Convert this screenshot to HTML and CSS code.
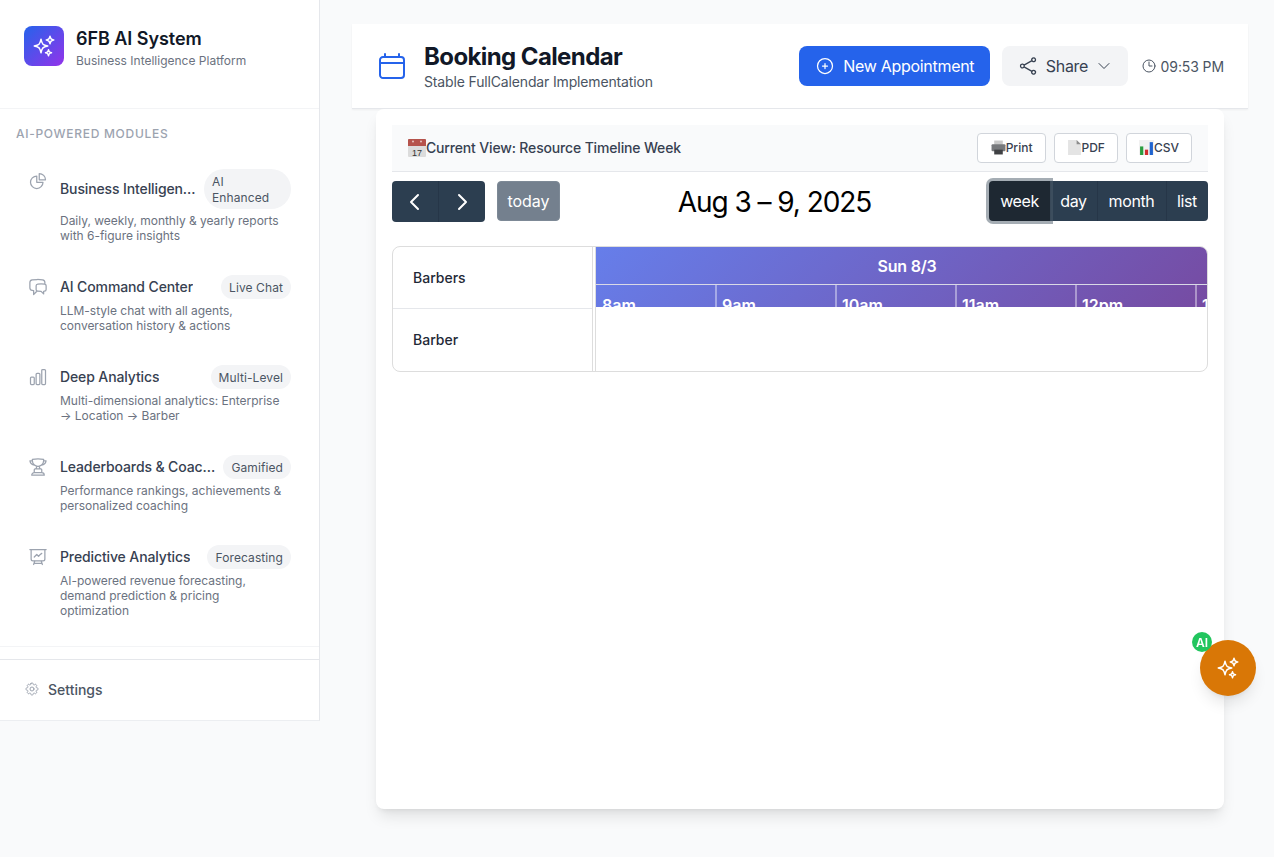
FILE: index.html
```html
<!DOCTYPE html>
<html lang="en">
<head>
  <meta charset="UTF-8">
  <meta name="viewport" content="width=device-width, initial-scale=1.0">
  <title>Booking Calendar</title>
  <link rel="stylesheet" href="styles.css">
</head>
<body>

<div class="app">
  <aside class="sidebar">
    <div class="brand">
      <div class="brand-logo">
        <svg class="icon" width="24" height="24" viewBox="0 0 24 24"><path d="M9.813 15.904 9 18.75l-.813-2.846a4.5 4.5 0 0 0-3.09-3.09L2.25 12l2.846-.813a4.5 4.5 0 0 0 3.09-3.09L9 5.25l.813 2.846a4.5 4.5 0 0 0 3.09 3.09L15.75 12l-2.846.813a4.5 4.5 0 0 0-3.09 3.09ZM18.259 8.715 18 9.75l-.259-1.035a3.375 3.375 0 0 0-2.455-2.456L14.25 6l1.036-.259a3.375 3.375 0 0 0 2.455-2.456L18 2.25l.259 1.035a3.375 3.375 0 0 0 2.456 2.456L21.75 6l-1.035.259a3.375 3.375 0 0 0-2.456 2.456ZM16.894 20.567 16.5 21.75l-.394-1.183a2.25 2.25 0 0 0-1.423-1.423L13.5 18.75l1.183-.394a2.25 2.25 0 0 0 1.423-1.423l.394-1.183.394 1.183a2.25 2.25 0 0 0 1.423 1.423l1.183.394-1.183.394a2.25 2.25 0 0 0-1.423 1.423Z"/></svg>
      </div>
      <div>
        <div class="brand-name">6FB AI System</div>
        <div class="brand-sub">Business Intelligence Platform</div>
      </div>
    </div>

    <div class="nav">
      <div class="nav-label">AI-POWERED MODULES</div>

      <div class="nav-item">
        <svg class="icon nav-icon" width="20" height="20" viewBox="0 0 24 24"><path d="M10.5 6a7.5 7.5 0 1 0 7.5 7.5h-7.5V6Z"/><path d="M13.5 10.5H21A7.5 7.5 0 0 0 13.5 3v7.5Z"/></svg>
        <div class="nav-body">
          <div class="nav-top">
            <span class="nav-title">Business Intelligence Reports</span>
            <span class="badge">AI Enhanced</span>
          </div>
          <div class="nav-desc">Daily, weekly, monthly &amp; yearly reports with 6-figure insights</div>
        </div>
      </div>

      <div class="nav-item">
        <svg class="icon nav-icon" width="20" height="20" viewBox="0 0 24 24"><path d="M20.25 8.511c.884.284 1.5 1.128 1.5 2.097v4.286c0 1.136-.847 2.1-1.98 2.193-.34.027-.68.052-1.02.072v3.091l-3-3c-1.354 0-2.694-.055-4.02-.163a2.115 2.115 0 0 1-.825-.242m9.345-8.334a2.126 2.126 0 0 0-.476-.095 48.64 48.64 0 0 0-8.048 0c-1.131.094-1.976 1.057-1.976 2.192v4.286c0 .837.46 1.58 1.155 1.951m9.345-8.334V6.637c0-1.621-1.152-3.026-2.76-3.235A48.455 48.455 0 0 0 11.25 3c-2.115 0-4.198.137-6.24.402-1.608.209-2.76 1.614-2.76 3.235v6.226c0 1.621 1.152 3.026 2.76 3.235.577.075 1.157.14 1.74.194V21l4.155-4.155"/></svg>
        <div class="nav-body">
          <div class="nav-top">
            <span class="nav-title">AI Command Center</span>
            <span class="badge">Live Chat</span>
          </div>
          <div class="nav-desc">LLM-style chat with all agents, conversation history &amp; actions</div>
        </div>
      </div>

      <div class="nav-item">
        <svg class="icon nav-icon" width="20" height="20" viewBox="0 0 24 24"><path d="M3 13.125C3 12.504 3.504 12 4.125 12h2.25c.621 0 1.125.504 1.125 1.125v6.75C7.5 20.496 6.996 21 6.375 21h-2.25A1.125 1.125 0 0 1 3 19.875v-6.75ZM9.75 8.625c0-.621.504-1.125 1.125-1.125h2.25c.621 0 1.125.504 1.125 1.125v11.25c0 .621-.504 1.125-1.125 1.125h-2.25a1.125 1.125 0 0 1-1.125-1.125V8.625ZM16.5 4.125c0-.621.504-1.125 1.125-1.125h2.25C20.496 3 21 3.504 21 4.125v15.75c0 .621-.504 1.125-1.125 1.125h-2.25a1.125 1.125 0 0 1-1.125-1.125V4.125Z"/></svg>
        <div class="nav-body">
          <div class="nav-top">
            <span class="nav-title">Deep Analytics</span>
            <span class="badge">Multi-Level</span>
          </div>
          <div class="nav-desc">Multi-dimensional analytics: Enterprise → Location → Barber</div>
        </div>
      </div>

      <div class="nav-item">
        <svg class="icon nav-icon" width="20" height="20" viewBox="0 0 24 24"><path d="M16.5 18.75h-9m9 0a3 3 0 0 1 3 3h-15a3 3 0 0 1 3-3m9 0v-3.375c0-.621-.503-1.125-1.125-1.125h-.871M7.5 18.75v-3.375c0-.621.504-1.125 1.125-1.125h.872m5.007 0H9.497m5.007 0a7.454 7.454 0 0 1-.982-3.172M9.497 14.25a7.454 7.454 0 0 0 .981-3.172M5.25 4.236c-.982.143-1.954.317-2.916.52A6.003 6.003 0 0 0 7.73 9.728M5.25 4.236V4.5c0 2.108.966 3.99 2.48 5.228M5.25 4.236V2.721C7.456 2.41 9.71 2.25 12 2.25c2.291 0 4.545.16 6.75.47v1.516M7.73 9.728a6.726 6.726 0 0 0 2.748 1.35m8.272-6.842V4.5c0 2.108-.966 3.99-2.48 5.228m2.48-5.492a46.32 46.32 0 0 1 2.916.52 6.003 6.003 0 0 1-5.395 4.972m0 0a6.726 6.726 0 0 1-2.749 1.35m0 0a6.772 6.772 0 0 1-3.044 0"/></svg>
        <div class="nav-body">
          <div class="nav-top">
            <span class="nav-title">Leaderboards &amp; Coaching</span>
            <span class="badge">Gamified</span>
          </div>
          <div class="nav-desc">Performance rankings, achievements &amp; personalized coaching</div>
        </div>
      </div>

      <div class="nav-item">
        <svg class="icon nav-icon" width="20" height="20" viewBox="0 0 24 24"><path d="M3.75 3v11.25A2.25 2.25 0 0 0 6 16.5h2.25M3.75 3h-1.5m1.5 0h16.5m0 0h1.5m-1.5 0v11.25A2.25 2.25 0 0 1 18 16.5h-2.25m-7.5 0h7.5m-7.5 0-1 3m8.5-3 1 3m0 0 .5 1.5m-.5-1.5h-9.5m0 0-.5 1.5m.75-9 3-3 2.148 2.148A12.061 12.061 0 0 1 16.5 7.605"/></svg>
        <div class="nav-body">
          <div class="nav-top">
            <span class="nav-title">Predictive Analytics</span>
            <span class="badge">Forecasting</span>
          </div>
          <div class="nav-desc">AI-powered revenue forecasting, demand prediction &amp; pricing optimization</div>
        </div>
      </div>
    </div>

    <div class="sidebar-foot">
      <svg class="icon" width="16" height="16" viewBox="0 0 24 24"><path d="M10.343 3.94c.09-.542.56-.94 1.11-.94h1.093c.55 0 1.02.398 1.11.94l.149.894c.07.424.384.764.78.93.398.164.855.142 1.205-.108l.737-.527a1.125 1.125 0 0 1 1.45.12l.773.774c.39.389.44 1.002.12 1.45l-.527.737c-.25.35-.272.806-.107 1.204.165.397.505.71.93.78l.893.15c.543.09.94.559.94 1.109v1.094c0 .55-.397 1.02-.94 1.11l-.894.149c-.424.07-.764.383-.929.78-.165.398-.143.854.107 1.204l.527.738c.32.447.269 1.06-.12 1.45l-.774.773a1.125 1.125 0 0 1-1.449.12l-.738-.527c-.35-.25-.806-.272-1.203-.107-.398.165-.71.505-.781.929l-.149.894c-.09.542-.56.94-1.11.94h-1.094c-.55 0-1.019-.398-1.11-.94l-.148-.894c-.071-.424-.384-.764-.781-.93-.398-.164-.854-.142-1.204.108l-.738.527c-.447.32-1.06.269-1.45-.12l-.773-.774a1.125 1.125 0 0 1-.12-1.45l.527-.737c.25-.35.272-.806.108-1.204-.165-.397-.506-.71-.93-.78l-.894-.15c-.542-.09-.94-.56-.94-1.109v-1.094c0-.55.398-1.02.94-1.11l.894-.149c.424-.07.765-.383.93-.78.165-.398.143-.854-.108-1.204l-.526-.738a1.125 1.125 0 0 1 .12-1.45l.773-.773a1.125 1.125 0 0 1 1.45-.12l.737.527c.35.25.807.272 1.204.107.397-.165.71-.505.78-.929l.15-.894Z"/><path d="M15 12a3 3 0 1 1-6 0 3 3 0 0 1 6 0Z"/></svg>
      <span>Settings</span>
    </div>
  </aside>

  <main class="main">
    <header class="topbar">
      <svg class="icon topbar-icon" width="32" height="32" viewBox="0 0 24 24"><path d="M6.75 3v2.25M17.25 3v2.25M3 18.75V7.5a2.25 2.25 0 0 1 2.25-2.25h13.5A2.25 2.25 0 0 1 21 7.5v11.25A2.25 2.25 0 0 1 18.75 21H5.25A2.25 2.25 0 0 1 3 18.75ZM3 9.75h18"/></svg>
      <div class="topbar-text">
        <h1>Booking Calendar</h1>
        <p>Stable FullCalendar Implementation</p>
      </div>
      <button class="btn-new">
        <svg class="icon" width="20" height="20" viewBox="0 0 24 24"><path d="M12 9v6m3-3H9m12 0a9 9 0 1 1-18 0 9 9 0 0 1 18 0Z"/></svg>
        New Appointment
      </button>
      <button class="btn-share">
        <svg class="icon" width="20" height="20" viewBox="0 0 24 24"><path d="M7.217 10.907a2.25 2.25 0 1 0 0 2.186m0-2.186c.18.324.283.696.283 1.093s-.103.77-.283 1.093m0-2.186 9.566-5.314m-9.566 7.5 9.566 5.314m0 0a2.25 2.25 0 1 0 3.935 2.186 2.25 2.25 0 0 0-3.935-2.186Zm0-12.814a2.25 2.25 0 1 0 3.933-2.185 2.25 2.25 0 0 0-3.933 2.185Z"/></svg>
        Share
        <svg class="icon" width="16" height="16" viewBox="0 0 24 24"><path d="m19.5 8.25-7.5 7.5-7.5-7.5"/></svg>
      </button>
      <div class="clock">
        <svg class="icon" width="16" height="16" viewBox="0 0 24 24"><path d="M12 6v6h4.5m4.5 0a9 9 0 1 1-18 0 9 9 0 0 1 18 0Z"/></svg>
        09:53 PM
      </div>
    </header>

    <section class="card">
      <div class="view-bar">
        <div class="view-name">
          <svg width="18" height="18" viewBox="0 0 18 18"><rect width="18" height="18" rx="1" fill="#dcdcdc"/><path d="M0 1a1 1 0 0 1 1-1h16a1 1 0 0 1 1 1v6H0Z" fill="#b5534c"/><circle cx="5" cy="2.5" r="1" fill="#e8c4c0"/><circle cx="13" cy="2.5" r="1" fill="#e8c4c0"/><text x="9" y="16.5" text-anchor="middle" class="emoji-num">17</text></svg>
          Current View: Resource Timeline Week
        </div>
        <div class="export">
          <button>
            <svg width="15" height="15" viewBox="0 0 14 14"><rect x="3" y="0.5" width="8" height="4" fill="#c9c9c9"/><rect x="0.5" y="4" width="13" height="6.5" rx="1" fill="#77797c"/><rect x="3" y="9" width="8" height="4.5" fill="#3f4144"/></svg>
            Print
          </button>
          <button>
            <svg width="15" height="15" viewBox="0 0 14 14"><path d="M1 0h8l4 4v10H1Z" fill="#e4e4e4"/><path d="M9 0l4 4H9Z" fill="#8d8d8d"/></svg>
            PDF
          </button>
          <button>
            <svg width="15" height="15" viewBox="0 0 14 14"><rect width="14" height="14" fill="#f1f1f1"/><rect x="1" y="6" width="3" height="8" fill="#2a9d3e"/><rect x="5.5" y="9" width="3" height="5" fill="#d32f2f"/><rect x="10" y="2" width="3" height="12" fill="#1f63cf"/></svg>
            CSV
          </button>
        </div>
      </div>

      <div class="cal-toolbar">
        <div class="cal-left">
          <div class="arrows">
            <button>
              <svg width="24" height="24" viewBox="0 0 24 24" class="arrow"><path d="M15 5l-7 7 7 7"/></svg>
            </button>
            <button>
              <svg width="24" height="24" viewBox="0 0 24 24" class="arrow"><path d="M9 5l7 7-7 7"/></svg>
            </button>
          </div>
          <button class="today">today</button>
        </div>
        <h2 class="cal-title">Aug 3 – 9, 2025</h2>
        <div class="views">
          <button class="view-week active">week</button>
          <button class="view-day">day</button>
          <button class="view-month">month</button>
          <button class="view-list">list</button>
        </div>
      </div>

      <div class="timeline">
        <div class="res-col">
          <div class="res-row">Barbers</div>
          <div class="res-row">Barber</div>
        </div>
        <div class="grid-col">
          <div class="grid-head">
            <div class="day-label">Sun 8/3</div>
            <div class="slots">
              <div class="slot">8am</div>
              <div class="slot">9am</div>
              <div class="slot">10am</div>
              <div class="slot">11am</div>
              <div class="slot">12pm</div>
              <div class="slot">1pm</div>
            </div>
          </div>
        </div>
      </div>
    </section>
  </main>
</div>

<button class="fab">
  <span class="fab-badge">AI</span>
  <svg class="icon" width="24" height="24" viewBox="0 0 24 24"><path d="M9.813 15.904 9 18.75l-.813-2.846a4.5 4.5 0 0 0-3.09-3.09L2.25 12l2.846-.813a4.5 4.5 0 0 0 3.09-3.09L9 5.25l.813 2.846a4.5 4.5 0 0 0 3.09 3.09L15.75 12l-2.846.813a4.5 4.5 0 0 0-3.09 3.09ZM18.259 8.715 18 9.75l-.259-1.035a3.375 3.375 0 0 0-2.455-2.456L14.25 6l1.036-.259a3.375 3.375 0 0 0 2.455-2.456L18 2.25l.259 1.035a3.375 3.375 0 0 0 2.456 2.456L21.75 6l-1.035.259a3.375 3.375 0 0 0-2.456 2.456ZM16.894 20.567 16.5 21.75l-.394-1.183a2.25 2.25 0 0 0-1.423-1.423L13.5 18.75l1.183-.394a2.25 2.25 0 0 0 1.423-1.423l.394-1.183.394 1.183a2.25 2.25 0 0 0 1.423 1.423l1.183.394-1.183.394a2.25 2.25 0 0 0-1.423 1.423Z"/></svg>
</button>

</body>
</html>
```

FILE: styles.css
```css
* { margin:0; padding:0; box-sizing:border-box; }

html, body { height:100%; overflow:hidden; }
body { background:#f9fafb; font-family:Inter, "Liberation Sans", sans-serif; color:#111827; }
button { font-family:inherit; cursor:pointer; border:none; }

.icon { fill:none; stroke:currentColor; stroke-width:1.5; stroke-linecap:round; stroke-linejoin:round; flex-shrink:0; display:block; }

.app { display:flex; align-items:flex-start; }

/* sidebar */
.sidebar { width:320px; height:721px; flex-shrink:0; background:#fff; border-right:1px solid #e5e7eb; border-bottom:1px solid #eceef1; display:flex; flex-direction:column; }

.brand { height:109px; padding:26px 24px 0; display:flex; gap:12px; border-bottom:1px solid #f3f4f6; }
.brand-logo { width:40px; height:40px; border-radius:8px; background:linear-gradient(135deg, #2563eb, #9333ea); color:#fff; display:flex; align-items:center; justify-content:center; }
.brand-name { font-size:18px; line-height:26px; font-weight:600; letter-spacing:-.05px; }
.brand-sub { font-size:12px; line-height:16px; color:#6b7280; margin-top:1px; }

.nav { padding:17px 16px 0; height:538px; border-bottom:1px solid #f3f4f6; }
.nav-label { font-size:12px; line-height:16px; font-weight:500; color:#9ca3af; letter-spacing:.7px; margin-bottom:15px; }
.nav-item { display:flex; gap:12px; padding:12px; margin-bottom:8px; }
.nav-icon { color:#9ca3af; margin-top:2px; }
.nav-body { flex:1; min-width:0; }
.nav-top { display:flex; align-items:center; justify-content:space-between; gap:8px; }
.nav-title { font-size:14px; line-height:20px; font-weight:500; color:#374151; letter-spacing:-.12px; white-space:nowrap; overflow:hidden; text-overflow:ellipsis; }
.badge { font-size:12px; line-height:16px; padding:5px 8px 3px; background:#f3f4f6; color:#4b5563; border-radius:9999px; letter-spacing:.1px; flex-shrink:0; max-width:87px; }
.nav-desc { font-size:12px; line-height:15px; color:#6b7280; margin-top:4px; letter-spacing:-.02px; }

.sidebar-foot { margin-top:12px; flex:1; border-top:1px solid #e5e7eb; padding:0 24px 2px; display:flex; align-items:center; gap:8px; font-size:14px; font-weight:500; color:#4b5563; }
.sidebar-foot .icon { color:#9ca3af; }

/* main */
.main { flex:1; min-width:0; padding:24px 26px 0 32px; }

.topbar { height:85px; background:#fff; border-bottom:1px solid #e5e7eb; box-shadow:0 1px 2px rgba(0,0,0,.05); padding:0 24px; display:flex; align-items:center; }
.topbar-icon { color:#2563eb; margin-right:16px; }
.topbar-text { flex:1; }
.topbar-text h1 { font-size:24px; line-height:30px; margin-top:2px; font-weight:700; letter-spacing:-.6px; }
.topbar-text p { font-size:14px; line-height:20px; color:#4b5563; letter-spacing:-.15px; }

.btn-new { height:40px; padding:0 16px; background:#2563eb; color:#fff; border-radius:8px; font-size:16px; letter-spacing:-.3px; display:flex; align-items:center; gap:8px; }
.btn-share { height:40px; padding:0 15.5px; margin-left:12px; background:#f3f4f6; color:#374151; border-radius:8px; font-size:16px; letter-spacing:-.3px; display:flex; align-items:center; gap:8px; }
.clock { margin-left:13px; font-size:14px; color:#4b5563; letter-spacing:-.1px; display:flex; align-items:center; gap:4px; }

.card { margin:0 24px; height:700px; background:#fff; border-radius:8px; box-shadow:0 10px 15px -3px rgba(0,0,0,.1), 0 4px 6px -4px rgba(0,0,0,.1); padding:16px; }

.view-bar { height:47px; background:#f9fafb; border-bottom:1px solid #e5e7eb; padding:0 16px 1px; display:flex; align-items:center; justify-content:space-between; }
.view-name { font-size:14px; font-weight:500; color:#374151; letter-spacing:-.16px; display:flex; align-items:center; }
.emoji-num { font-size:9px; font-family:"Liberation Sans", sans-serif; fill:#333; letter-spacing:0; }
.export { display:flex; gap:8px; }
.export button { height:30px; padding:0 12px; background:#fff; border:1px solid #d1d5db; border-radius:4px; font-size:12px; font-weight:500; color:#374151; display:flex; align-items:center; }
.export button:first-child { padding-left:13px; }

.cal-toolbar { display:flex; align-items:flex-start; justify-content:space-between; padding-top:9px; height:74px; }
.cal-left { display:flex; gap:12px; width:168px; }
.arrows { display:flex; background:#2c3e50; border-radius:4px; height:41px; }
.arrows button { width:46.5px; background:none; color:#fff; display:flex; align-items:center; justify-content:center; }
.arrows button:first-child { border-right:1px solid #263648; }
.arrow { fill:none; stroke:#fff; stroke-width:2; stroke-linecap:round; stroke-linejoin:round; }
.today { width:64px; height:40px; background:#74808e; border:1px solid #7d8996; color:#fff; border-radius:4px; font-size:16px; }
.cal-title { font-size:28px; line-height:42px; font-weight:400; color:#000; letter-spacing:-1.05px; }
.views { display:flex; height:40px; }
.views button { background:#2c3e50; color:#fff; font-size:16px; letter-spacing:-.4px; box-shadow:inset 1px 0 0 #263648; }
.views button:first-child { border-radius:4px 0 0 4px; }
.views button:last-child { border-radius:0 4px 4px 0; }
.view-week { width:61px; }
.view-day { width:47px; }
.view-month { width:69px; }
.view-list { width:42px; }
.views .active { background:#1e2832; box-shadow:0 0 0 3px rgba(76,91,106,.5); position:relative; }

/* timeline */
.timeline { width:816px; height:126px; border:1px solid #ddd; border-radius:8px; display:flex; overflow:hidden; }
.res-col { width:200px; border-right:1px solid #ddd; }
.res-row { height:62px; padding:0 20px; display:flex; align-items:center; font-size:14px; font-weight:500; color:#1f2937; }
.res-row:first-child { border-bottom:1px solid #e5e7eb; }
.res-row:last-child { padding-bottom:2px; }
.grid-col { flex:1; margin-left:2px; border-left:1px solid #ddd; min-width:0; }
.grid-head { height:60px; overflow:hidden; background:linear-gradient(135deg, #667eea, #764ba2); color:#fff; }
.day-label { height:38px; border-bottom:1px solid #d9d9e6; padding-left:11px; display:flex; align-items:center; justify-content:center; font-size:16px; font-weight:600; letter-spacing:-.2px; }
.slots { display:flex; height:22px; margin-left:1px; }
.slot { width:120px; flex-shrink:0; padding:10px 5px 0; border-right:2px solid rgba(255,255,255,.4); font-size:16px; font-weight:600; line-height:20px; }

/* floating button */
.fab { position:fixed; left:1200px; top:640px; width:56px; height:56px; border-radius:50%; background:#d97706; color:#fff; display:flex; align-items:center; justify-content:center; box-shadow:0 10px 15px -3px rgba(0,0,0,.1), 0 4px 6px -4px rgba(0,0,0,.1); }
.fab-badge { position:absolute; left:-8px; top:-8px; width:20px; height:20px; border-radius:50%; background:#22c55e; color:#fff; font-size:12px; font-weight:600; display:flex; align-items:center; justify-content:center; }
```
